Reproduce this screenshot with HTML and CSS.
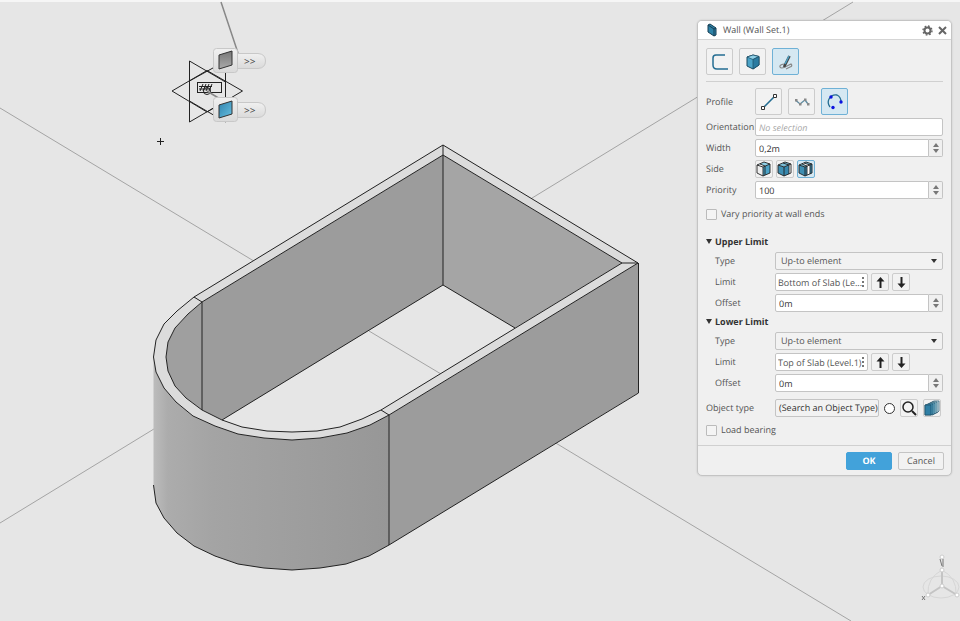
FILE: index.html
```html
<!DOCTYPE html>
<html lang="en">
<head>
    <meta charset="UTF-8">
    <meta name="viewport" content="width=device-width, initial-scale=1.0">
    <title>Wall (Wall Set.1)</title>
    <link rel="stylesheet" href="styles.css">
</head>
<body>
    <svg class="scene" viewBox="0 0 960 621" preserveAspectRatio="xMinYMin slice">
        <defs>
            <linearGradient id="round" x1="0" x2="1" y1="0" y2="0">
                <stop offset="0" stop-color="#bcbcbc"/>
                <stop offset="0.06" stop-color="#acacac"/>
                <stop offset="0.25" stop-color="#a4a4a4"/>
                <stop offset="0.6" stop-color="#9e9e9e"/>
                <stop offset="1" stop-color="#979797"/>
            </linearGradient>
            <linearGradient id="grayFace" x1="0" x2="0" y1="0" y2="1">
                <stop offset="0" stop-color="#777"/>
                <stop offset="1" stop-color="#aaa"/>
            </linearGradient>
            <linearGradient id="blueFace" x1="0" x2="1" y1="0" y2="1">
                <stop offset="0" stop-color="#2f83ad"/>
                <stop offset="1" stop-color="#69bfe0"/>
            </linearGradient>
            <linearGradient id="handle" x1="0" x2="0" y1="0" y2="1">
                <stop offset="0" stop-color="#f0f0f0"/>
                <stop offset="1" stop-color="#dadada"/>
            </linearGradient>
        </defs>

        <path fill="#f6f6f6" d="M0 0H960V2H0Z"/>

        <!-- grid axes -->
        <path class="axis" d="M0 108L851 621M0 523L853 2"/>

        <!-- walls -->
        <path fill="#e6e6e6" d="M222 420L443 285L515 328L381 410L340 427L292 432L242 427Z"/>
        <path class="axis" d="M369 331L441 374"/>
        <path fill="#9c9c9c" d="M202 302L443 155V285L222 420L202 410Z"/>
        <path fill="#9f9f9f" d="M202 302L188 314L175 328L168 342L166 357L168 371L175 386L186 398L202 410Z"/>
        <path fill="#a5a5a5" d="M443 155L622 263L515 328L443 285Z"/>
        <path fill="url(#round)" d="M153.500 357L156 372L164 388L176 402L193 416L215 426L238 434L264 438L292 440L320 438L347 433L370 425L389 415V545L369 556L346 564L320 568L292 570L264 568L238 564L215 556L194 546L177 533L164 518L156 503L153.500 485Z"/>
        <path fill="#9c9c9c" d="M389 415L638 263V393L389 545Z"/>
        <path fill="#dcdcdc" fill-rule="evenodd" d="M443 145L638 263L389 415L370 425L347 433L320 438L292 440L264 438L238 434L215 426L193 416L176 402L164 388L156 372L153.500 357L156 340L164 324L177 311L194 297ZM443 155L202 302L188 314L175 328L168 342L166 357L168 371L175 386L186 398L202 410L222 420L242 427L267 431L292 432L317 431L340 427L362 419L381 410L622 263Z"/>
        <g class="edge">
            <path d="M443 145L638 263L389 415L370 425L347 433L320 438L292 440L264 438L238 434L215 426L193 416L176 402L164 388L156 372L153.500 357L156 340L164 324L177 311L194 297Z"/>
            <path d="M443 155L202 302L188 314L175 328L168 342L166 357L168 371L175 386L186 398L202 410L222 420L242 427L267 431L292 432L317 431L340 427L362 419L381 410L622 263Z"/>
            <path d="M443 145V285M202 302V410M194 297L202 302M381 410L389 415M622 263H638M222 420L443 285L515 328"/>
            <path d="M389 415V545M638.500 263V393L389 545L369 556L346 564L320 568L292 570L264 568L238 564L215 556L194 546L177 533L164 518L156 503L153.500 485"/>
        </g>

        <!-- reference planes -->
        <path class="leader" d="M221 2L238 53"/>
        <g class="plane">
            <path d="M189.500 61L225.500 82V61L189.500 81Z"/>
            <path d="M189.500 61V122L225.500 101M189.500 101L225.500 122V61"/>
            <path d="M172 91L207 70.500L242.500 91L207 112Z"/>
            <rect x="197.500" y="82.500" width="24" height="10"/>
            <path d="M203 84L200 91M206 84L203 91M209 84L206 91M212 84L209 91M199 86.500H212M199 89H211"/>
            <circle cx="207" cy="91" r="3.500"/>
            <path class="leader" d="M207 91L225 102"/>
        </g>
        <path class="cross" d="M157 141.500H164M160.500 138V145"/>

        <!-- handles -->
        <g class="handle">
            <path d="M236 53.500H258Q265.500 54 265.500 61T258 68.500H236Z"/>
            <rect x="213.500" y="48.500" width="24" height="24" rx="3"/>
            <path d="M236 102.500H258Q265.500 103 265.500 110T258 117.500H236Z"/>
            <rect x="213.500" y="97.500" width="24" height="24" rx="3"/>
        </g>
        <path class="face" fill="url(#grayFace)" d="M219 55L232 51V65L219 69Z"/>
        <path class="face" fill="url(#blueFace)" d="M219 105L232 101V114L219 118Z"/>
        <text class="more" x="244" y="65">&gt;&gt;</text>
        <text class="more" x="244" y="114">&gt;&gt;</text>

        <!-- compass -->
        <g class="compass">
            <ellipse cx="941" cy="587" rx="18" ry="11"/>
            <path d="M942 570Q927 578 928 594M942 570Q957 578 956 594"/>
            <path class="rays" d="M942 569V586L928 595M942 586L957 595"/>
            <circle cx="942" cy="586" r="2"/>
            <circle cx="928" cy="595" r="2"/>
            <circle cx="957" cy="595" r="2"/>
            <circle cx="942" cy="570" r="2"/>
            <circle cx="942" cy="557" r="2"/>
            <path class="label" d="M940 559L942 566M943 559V567M922 596L925 600M925 596L922 600"/>
        </g>
    </svg>

    <form class="panel">
        <header class="title-bar">
            <svg width="12" height="14" viewBox="0 0 12 14"><path fill="#2e83a8" stroke="#163d52" d="M2 2L4 1L10 5V12L8 13L2 9Z"/><path fill="none" stroke="#163d52" d="M2 2L8 6V13M8 6L10 5"/></svg>
            <h1>Wall (Wall Set.1)</h1>
            <button type="button" class="plain" aria-label="Settings"><svg width="11" height="11" viewBox="0 0 11 11"><circle cx="5.500" cy="5.500" r="3" fill="none" stroke="#666" stroke-width="2"/><circle cx="5.500" cy="5.500" r="4.500" fill="none" stroke="#666" stroke-width="1.400" stroke-dasharray="1.700 1.834"/></svg></button>
            <button type="button" class="plain" aria-label="Close"><svg width="9" height="9" viewBox="0 0 9 9"><path d="M1 1L8 8M8 1L1 8" stroke="#666" stroke-width="2"/></svg></button>
        </header>

        <div class="body">
            <div class="tools tabs">
                <button type="button" class="tool" aria-label="Path"><svg width="20" height="20" viewBox="0 0 20 20"><path fill="none" stroke="#246d92" stroke-width="1.500" d="M15 3H6Q3 3 3 6V13Q3 17 7 17H18"/></svg></button>
                <button type="button" class="tool" aria-label="Volume"><svg width="20" height="20" viewBox="0 0 20 20"><path fill="#4ba3c7" stroke="#1b4b63" d="M4 5L10 3L16 4.500V13L10 17L4 14Z"/><path fill="#8fd0e7" stroke="#1b4b63" stroke-width="0.700" d="M4 5L10 3L16 4.500L10 7.500Z"/><path fill="#2a7ba1" stroke="#1b4b63" stroke-width="0.700" d="M10 7.500L16 4.500V13L10 17Z"/></svg></button>
                <button type="button" class="tool active" aria-label="Sketch"><svg width="20" height="20" viewBox="0 0 20 20"><path fill="none" stroke="#888" stroke-width="1.200" d="M8 12Q3 13 4 15T9 15T15 12Q17 14 14 15L10 17"/><path stroke="#444" stroke-width="2.600" d="M8 15L13.500 4"/><path stroke="#4d9fc2" stroke-width="1.600" d="M9 12L13 4"/></svg></button>
            </div>

            <div class="row tall">
                <span class="name">Profile</span>
                <div class="tools">
                    <button type="button" class="tool" aria-label="Line"><svg width="20" height="20" viewBox="0 0 20 20"><path stroke="#246d92" stroke-width="1.600" d="M4 16L16 4"/><path fill="#fff" stroke="#333" stroke-width="1" d="M2.500 14.500H5.500V17.500H2.500ZM14.500 2.500H17.500V5.500H14.500Z"/></svg></button>
                    <button type="button" class="tool" aria-label="Polyline"><svg width="20" height="20" viewBox="0 0 20 20"><path fill="none" stroke="#5f8ca2" stroke-width="1.300" d="M4 8.500L8 12L13 8L16 12"/><path fill="#888" d="M3 7H5.500V9.500H3ZM7 11H9.500V13.500H7ZM12 6.500H14.500V9H12ZM15 11H17.500V13.500H15Z"/></svg></button>
                    <button type="button" class="tool active" aria-label="Arc"><svg width="20" height="20" viewBox="0 0 20 20"><path fill="none" stroke="#246d92" stroke-width="1.300" d="M5 15Q2 11 4 7Q7 2 12 3Q16 5 16 10"/><circle cx="6" cy="5" r="1.700" fill="#0b13e0"/><circle cx="16" cy="10" r="1.700" fill="#0b13e0"/><circle cx="8" cy="15.500" r="1.700" fill="#0b13e0"/></svg></button>
                </div>
            </div>
            <div class="row">
                <label for="orientation">Orientation</label>
                <input type="text" id="orientation" placeholder="No selection">
            </div>
            <div class="row">
                <label for="width">Width</label>
                <div class="spinner"><input type="text" id="width" value="0,2m"><span class="steps"><button type="button" aria-label="Increase width"></button><button type="button" aria-label="Decrease width"></button></span></div>
            </div>
            <div class="row">
                <span class="name">Side</span>
                <div class="sides">
                    <button type="button" class="small" aria-label="Inside"><svg width="16" height="16" viewBox="0 0 16 16"><path fill="#eee" d="M1 4L7 6V15L1 12Z"/><path fill="#8fd0e7" d="M1 4L8 1L14 3L7 6Z"/><path fill="#4ba3c7" d="M7 6L14 3V12L7 15Z"/><path fill="#fff" d="M1 4L4 3L9 5L7 6Z"/><path fill="none" stroke="#222" stroke-width="0.900" d="M1 4L8 1L14 3V12L7 15L1 12ZM1 4L7 6V15M7 6L14 3M4 3L9 5V14"/></svg></button>
                    <button type="button" class="small" aria-label="Outside"><svg width="16" height="16" viewBox="0 0 16 16"><path fill="#3f8fb3" d="M1 4L7 6V15L1 12Z"/><path fill="#79bcd6" d="M1 4L8 1L14 3L7 6Z"/><path fill="#3787ad" d="M7 6L12 4V13L7 15Z"/><path fill="#fff" d="M12 4L14 3V12L12 13Z"/><path fill="none" stroke="#222" stroke-width="0.900" d="M1 4L8 1L14 3V12L7 15L1 12ZM1 4L7 6V15M7 6L14 3M6 2L12 4V13"/></svg></button>
                    <button type="button" class="small active" aria-label="Centered"><svg width="16" height="16" viewBox="0 0 16 16"><path fill="#3f8fb3" d="M1 4L7 6V15L1 12Z"/><path fill="#79bcd6" d="M1 4L8 1L14 3L7 6Z"/><path fill="#3787ad" d="M7 6L14 3V12L7 15Z"/><path fill="#fff" d="M4 3L6 2L12 4V13L9 14V5Z"/><path fill="none" stroke="#222" stroke-width="0.900" d="M1 4L8 1L14 3V12L7 15L1 12ZM1 4L7 6V15M7 6L14 3M4 3L9 5V14M6 2L12 4V13"/></svg></button>
                </div>
            </div>
            <div class="row">
                <label for="priority">Priority</label>
                <div class="spinner"><input type="text" id="priority" value="100"><span class="steps"><button type="button" aria-label="Increase priority"></button><button type="button" aria-label="Decrease priority"></button></span></div>
            </div>
            <label class="check vary"><input type="checkbox"> Vary priority at wall ends</label>

            <h2>Upper Limit</h2>
            <div class="row nested">
                <label for="upper-type">Type</label>
                <div class="drop"><select id="upper-type"><option>Up-to element</option></select></div>
            </div>
            <div class="row nested">
                <label for="upper-limit">Limit</label>
                <div class="limit">
                    <div class="picker"><input type="text" id="upper-limit" value="Bottom of Slab (Le..."><i></i></div>
                    <button type="button" class="small" aria-label="Up"><svg width="11" height="13" viewBox="0 0 11 13"><path fill="#222" d="M5.500 1L9.500 5.500H6.500V12H4.500V5.500H1.500Z"/></svg></button>
                    <button type="button" class="small" aria-label="Down"><svg width="11" height="13" viewBox="0 0 11 13"><path fill="#222" d="M5.500 12L9.500 7.500H6.500V1H4.500V7.500H1.500Z"/></svg></button>
                </div>
            </div>
            <div class="row nested">
                <label for="upper-offset">Offset</label>
                <div class="spinner"><input type="text" id="upper-offset" value="0m"><span class="steps"><button type="button" aria-label="Increase upper offset"></button><button type="button" aria-label="Decrease upper offset"></button></span></div>
            </div>

            <h2>Lower Limit</h2>
            <div class="row nested">
                <label for="lower-type">Type</label>
                <div class="drop"><select id="lower-type"><option>Up-to element</option></select></div>
            </div>
            <div class="row nested">
                <label for="lower-limit">Limit</label>
                <div class="limit">
                    <div class="picker"><input type="text" id="lower-limit" value="Top of Slab (Level.1)"><i></i></div>
                    <button type="button" class="small" aria-label="Up"><svg width="11" height="13" viewBox="0 0 11 13"><path fill="#222" d="M5.500 1L9.500 5.500H6.500V12H4.500V5.500H1.500Z"/></svg></button>
                    <button type="button" class="small" aria-label="Down"><svg width="11" height="13" viewBox="0 0 11 13"><path fill="#222" d="M5.500 12L9.500 7.500H6.500V1H4.500V7.500H1.500Z"/></svg></button>
                </div>
            </div>
            <div class="row nested">
                <label for="lower-offset">Offset</label>
                <div class="spinner"><input type="text" id="lower-offset" value="0m"><span class="steps"><button type="button" aria-label="Increase lower offset"></button><button type="button" aria-label="Decrease lower offset"></button></span></div>
            </div>

            <div class="row nested object">
                <span class="name">Object type</span>
                <div class="limit">
                    <button type="button" class="search">(Search an Object Type)</button>
                    <input type="radio" aria-label="Object type">
                    <button type="button" class="small" aria-label="Search"><svg width="16" height="16" viewBox="0 0 16 16"><circle cx="7" cy="7" r="5" fill="none" stroke="#222" stroke-width="1.500"/><path stroke="#222" stroke-width="2" d="M11 11L15 15"/></svg></button>
                    <button type="button" class="small" aria-label="Catalog"><svg width="16" height="16" viewBox="0 0 16 16"><g stroke="#1b4b63" stroke-width="0.700"><path fill="#cfe6ef" d="M8 2L10 1L15 1V11L13 13L8 12Z"/><path fill="#9fcfe1" d="M6 3L8 2H13V12L11 14L6 13Z"/><path fill="#6fb4cf" d="M4 4L6 3H11V13L9 15L4 14Z"/><path fill="#4797ba" d="M1 5L4 4H9V14L7 15H1Z"/><path fill="#2f7fa5" d="M1 5H7V15H1Z"/></g></svg></button>
                </div>
            </div>
            <label class="check"><input type="checkbox"> Load bearing</label>
        </div>

        <footer>
            <button type="submit" class="btn primary">OK</button>
            <button type="button" class="btn">Cancel</button>
        </footer>
    </form>
</body>
</html>
```

FILE: styles.css
```css
* {
    box-sizing: border-box;
}
body {
    margin: 0;
    min-height: 100vh;
    overflow: hidden;
    background: #e6e6e6;
    color: #555;
    font-family: "Open Sans", "Noto Sans", sans-serif;
    font-size: 9px;
    line-height: 12px;
    text-rendering: geometricPrecision;
}
button, input, select {
    margin: 0;
    padding: 0;
    color: inherit;
    font: inherit;
    text-rendering: inherit;
}
svg {
    display: block;
}

/* 3D view */
.scene {
    position: absolute;
    inset: 0;
    width: 100%;
    height: 100%;
}
.axis {
    fill: none;
    stroke: #a4a4a4;
    stroke-width: 1;
}
.edge {
    fill: none;
    stroke: #222;
    stroke-width: 1;
}
.leader {
    fill: none;
    stroke: #888;
    stroke-width: 1.5;
}
.plane {
    fill: none;
    stroke: #222;
}
.cross {
    stroke: #222;
}
.handle {
    fill: url(#handle);
    stroke: #c8c8c8;
}
.face {
    stroke: #333;
}
.more {
    fill: #444;
    font-family: "Noto Sans", sans-serif;
    font-size: 10px;
}
.compass {
    fill: none;
    stroke: #d6d6d6;
}
.compass circle {
    fill: #fff;
    stroke: #ccc;
}
.compass .rays {
    stroke: #c4c4c4;
    stroke-width: 2;
}
.compass .label {
    stroke: #777;
}

/* command panel */
.panel {
    position: absolute;
    top: 20px;
    right: 8px;
    width: 255px;
    background: #f0f0f0;
    border: 1px solid #c4c4c4;
    border-radius: 5px;
    box-shadow: 0 0 2px rgba(0, 0, 0, 0.15);
}
.title-bar {
    display: flex;
    align-items: center;
    gap: 5px;
    height: 19px;
    padding: 0 4px 0 8px;
    background: #fff;
    border-bottom: 1px solid #d5d5d5;
    border-radius: 4px 4px 0 0;
}
h1 {
    flex: 1;
    margin: 0;
    font-size: 9px;
    font-weight: normal;
}
.plain {
    border: 0;
    background: none;
}
.body {
    padding: 8px 8px 9px;
}
.tools {
    display: flex;
    gap: 6px;
}
.tabs {
    padding-bottom: 6px;
    margin-bottom: 6px;
    border-bottom: 1px solid #d0d0d0;
}
.tool, .small {
    display: grid;
    place-items: center;
    width: 27px;
    height: 27px;
    background: #f2f2f2;
    border: 1px solid #ccc;
    border-radius: 2px;
}
.small {
    width: 18px;
    height: 18px;
}
.tool.active, .small.active {
    background: #d5e8f2;
    border-color: #6fb1d6;
}
.row {
    display: grid;
    grid-template-columns: 49px 1fr;
    align-items: center;
    height: 18px;
    margin-bottom: 3px;
}
.row.tall {
    height: 27px;
}
.nested {
    grid-template-columns: 69px 1fr;
}
.nested label {
    padding-left: 9px;
}
.row input[type="text"], .drop, .search {
    width: 100%;
    min-width: 0;
    height: 18px;
    padding: 0 3px;
    background: #fff;
    border: 1px solid #c4c4c4;
    border-radius: 2px;
    color: #333;
}
::placeholder {
    color: #aaa;
    font-style: italic;
    opacity: 1;
}
.spinner {
    display: flex;
}
.row .spinner input {
    border-radius: 2px 0 0 2px;
}
.steps {
    display: flex;
    flex: 0 0 14px;
    flex-direction: column;
    justify-content: space-evenly;
    align-items: center;
    border: 1px solid #c4c4c4;
    border-left: 0;
    border-radius: 0 2px 2px 0;
}
.steps button {
    border: 3px solid transparent;
    border-top: 0;
    border-bottom: 4px solid #777;
    background: none;
}
.steps button + button {
    border-top: 4px solid #777;
    border-bottom: 0;
}
.sides {
    display: flex;
    gap: 3px;
}
.check {
    display: flex;
    align-items: center;
    gap: 4px;
    height: 12px;
}
.check input {
    appearance: none;
    width: 11px;
    height: 11px;
    border: 1px solid #bbb;
    border-radius: 1px;
    background: #f4f4f4;
}
.vary {
    margin: 9px 0 15px;
}
h2 {
    display: flex;
    align-items: center;
    gap: 3px;
    height: 13px;
    margin: 0 0 4px;
    color: #333;
    font-size: 9px;
    line-height: 13px;
}
h2::before {
    content: "";
    border: 3px solid transparent;
    border-top: 5px solid #333;
    border-bottom: 0;
}
.drop {
    display: flex;
    align-items: center;
}
.row .drop {
    padding-right: 5px;
    background: #f2f2f2;
}
.drop::after {
    content: "";
    border: 3px solid transparent;
    border-top: 4px solid #333;
    border-bottom: 0;
}
.drop select {
    appearance: none;
    flex: 1;
    padding-left: 2px;
    border: 0;
    background: none;
    color: #555;
}
.limit {
    display: flex;
    align-items: center;
    gap: 3px;
}
.picker {
    display: flex;
    align-items: center;
    width: 93px;
    height: 18px;
    padding-right: 3px;
    background: #fff;
    border: 1px solid #c4c4c4;
    border-radius: 2px;
}
.row .picker input {
    height: 16px;
    padding: 0 0 0 2px;
    border: 0;
    color: #555;
}
.picker i {
    height: 10px;
    border-left: 2px dotted #777;
}
.object {
    margin: 7px 0;
}
.object .limit {
    gap: 5px;
}
.row .search {
    width: 104px;
    background: #f2f2f2;
    white-space: nowrap;
}
.limit input[type="radio"] {
    appearance: none;
    width: 11px;
    height: 11px;
    background: #fff;
    border: 1px solid #333;
    border-radius: 50%;
}
footer {
    display: flex;
    justify-content: flex-end;
    gap: 6px;
    padding: 6px 7px 5px;
    border-top: 1px solid #d0d0d0;
}
.btn {
    width: 46px;
    height: 18px;
    background: #f2f2f2;
    border: 1px solid #c4c4c4;
    border-radius: 2px;
}
.primary {
    background: #42a2da;
    border-color: #42a2da;
    color: #fff;
    font-weight: bold;
}
```
